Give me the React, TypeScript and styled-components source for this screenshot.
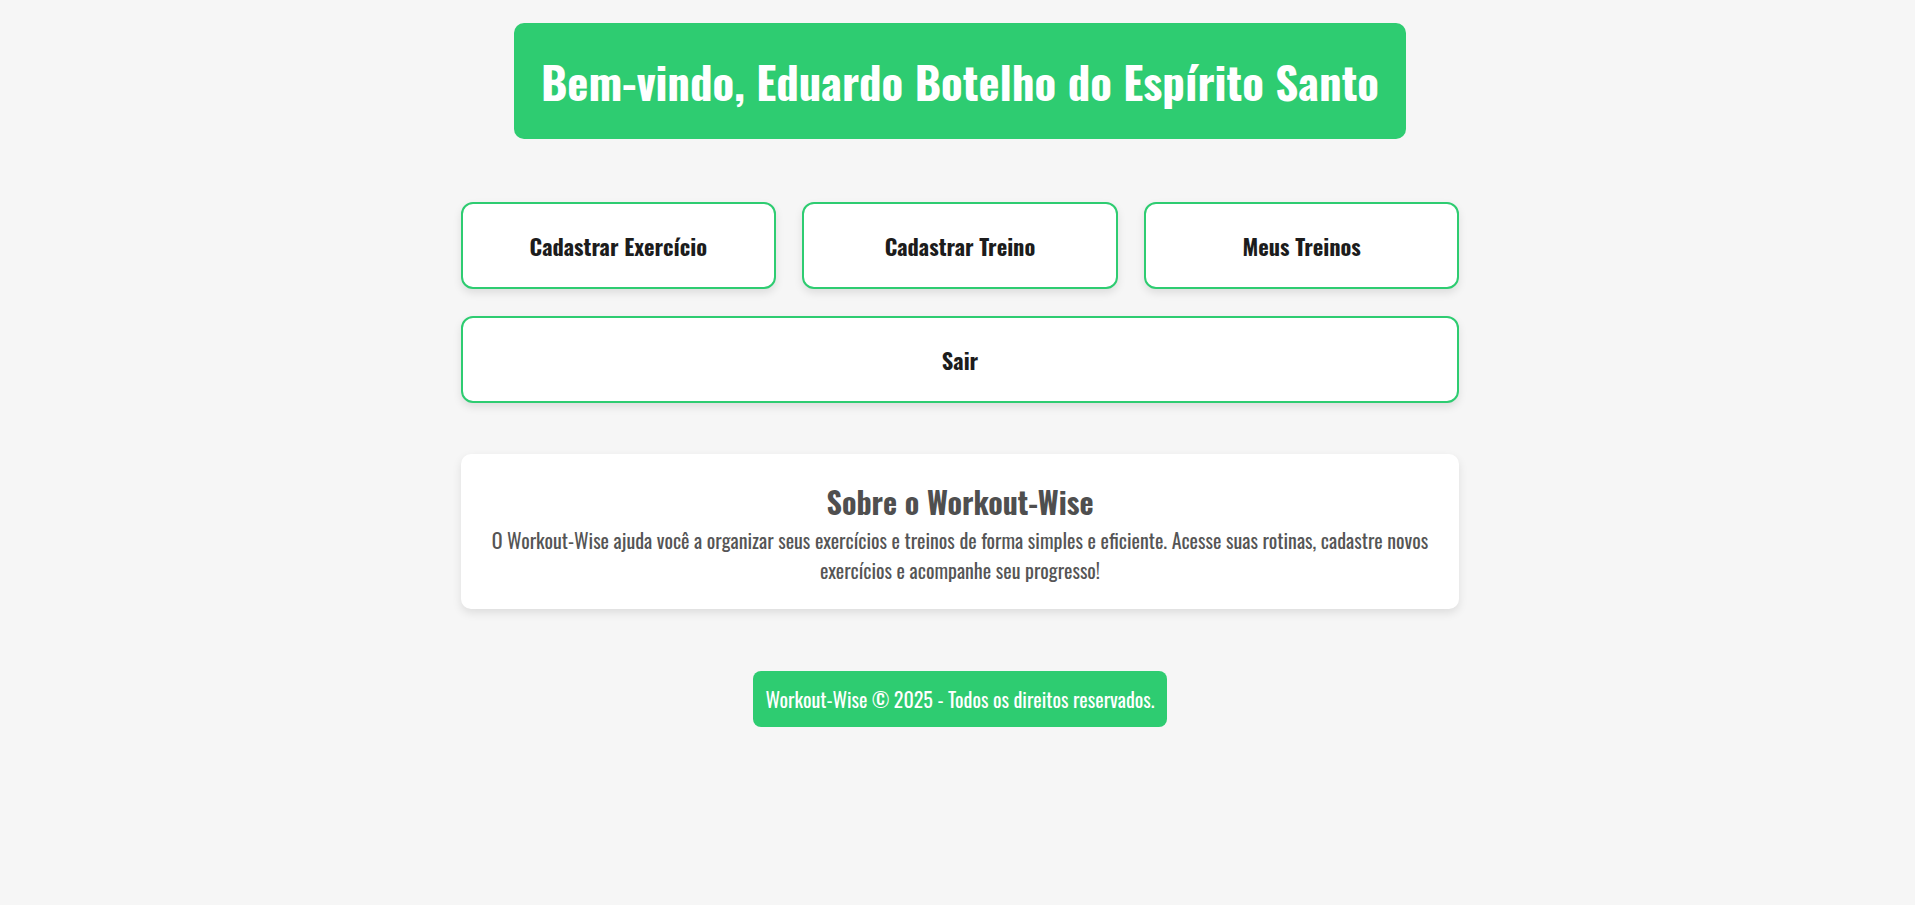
import React from "react";
import styled, { createGlobalStyle } from "styled-components";

const GlobalStyle = createGlobalStyle`
  * { box-sizing: border-box; }
  body {
    margin: 0;
    background: #f6f6f6;
    font-family: "Oswald", "Roboto Condensed", "Liberation Sans Narrow", sans-serif;
  }
`;

const Page = styled.div`
  display: flex;
  flex-direction: column;
  align-items: center;
  padding: 23px 0 0 5px;
`;

const Header = styled.header`
  background: #2ecc71;
  border-radius: 10px;
  padding: 25px 26.6px;
`;

const Title = styled.h1`
  margin: 0;
  color: #fff;
  font-size: 44.8px;
  font-weight: 700;
  white-space: nowrap;
`;

const Main = styled.main`
  width: 998.6px;
  margin-top: 63px;
  display: flex;
  flex-direction: column;
`;

const ButtonGrid = styled.nav`
  display: grid;
  grid-template-columns: repeat(3, 1fr);
  gap: 27px 26.5px;
`;

const NavButton = styled.button<{ $wide?: boolean }>`
  grid-column: ${(p) => (p.$wide ? "1 / -1" : "auto")};
  height: 87px;
  background: #fff;
  border: 2px solid #2ecc71;
  border-radius: 12px;
  box-shadow: 0 4px 8px rgba(0, 0, 0, 0.1);
  font-family: "Oswald", sans-serif;
  font-size: 22.4px;
  font-weight: 700;
  color: #1c1c1c;
  cursor: pointer;
`;

const AboutCard = styled.section`
  margin-top: 51px;
  background: #fff;
  border-radius: 10px;
  box-shadow: 0 4px 10px rgba(0, 0, 0, 0.1);
  padding: 25px 20px 24px;
  text-align: center;
`;

const AboutTitle = styled.h2`
  margin: 0 0 1px;
  font-size: 30px;
  font-weight: 700;
  color: #4f4f4f;
`;

const AboutText = styled.p`
  margin: 0;
  font-size: 20px;
  color: #555;
`;

const Footer = styled.footer`
  margin-top: 62px;
  background: #2ecc71;
  color: #fff;
  border-radius: 8px;
  padding: 13px 13px;
  font-size: 20px;
`;

export default function App() {
  return (
    <>
      <GlobalStyle />
      <Page>
        <Header>
          <Title>Bem-vindo, Eduardo Botelho do Espírito Santo</Title>
        </Header>
        <Main>
          <ButtonGrid>
            <NavButton>Cadastrar Exercício</NavButton>
            <NavButton>Cadastrar Treino</NavButton>
            <NavButton>Meus Treinos</NavButton>
            <NavButton $wide>Sair</NavButton>
          </ButtonGrid>
          <AboutCard>
            <AboutTitle>Sobre o Workout-Wise</AboutTitle>
            <AboutText>
              O Workout-Wise ajuda você a organizar seus exercícios e treinos de forma simples e eficiente. Acesse suas
              rotinas, cadastre novos exercícios e acompanhe seu progresso!
            </AboutText>
          </AboutCard>
        </Main>
        <Footer>Workout-Wise © 2025 - Todos os direitos reservados.</Footer>
      </Page>
    </>
  );
}
